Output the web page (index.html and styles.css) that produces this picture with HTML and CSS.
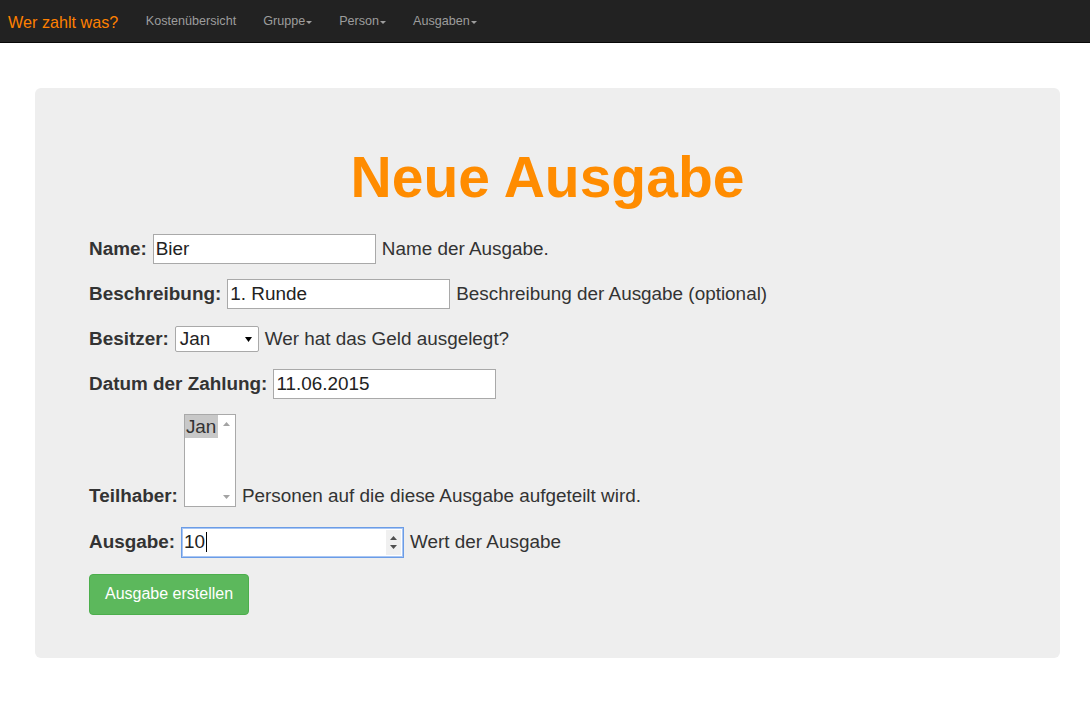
FILE: index.html
```html
<!DOCTYPE html>
<html lang="de">
<head>
<meta charset="utf-8">
<title>Neue Ausgabe</title>
<link rel="stylesheet" href="styles.css">
</head>
<body>
<nav class="navbar">
  <a class="brand" href="#">Wer zahlt was?</a>
  <ul class="nav">
    <li><a href="#">Kostenübersicht</a></li>
    <li><a href="#">Gruppe<span class="caret"></span></a></li>
    <li><a href="#">Person<span class="caret"></span></a></li>
    <li><a href="#">Ausgaben<span class="caret"></span></a></li>
  </ul>
</nav>
<main class="page">
  <section class="jumbotron">
    <h1 class="title">Neue Ausgabe</h1>
    <form class="form">
      <div class="row">
        <label class="lbl">Name:</label>
        <span class="input w-name">Bier</span>
        <span class="help">Name der Ausgabe.</span>
      </div>
      <div class="row">
        <label class="lbl">Beschreibung:</label>
        <span class="input">1. Runde</span>
        <span class="help">Beschreibung der Ausgabe (optional)</span>
      </div>
      <div class="row">
        <label class="lbl">Besitzer:</label>
        <span class="select">Jan
          <svg class="select-arrow" width="7" height="5" viewBox="0 0 7 5"><path d="M0 0H7L3.5 5Z" fill="#000"/></svg>
        </span>
        <span class="help">Wer hat das Geld ausgelegt?</span>
      </div>
      <div class="row">
        <label class="lbl">Datum der Zahlung:</label>
        <span class="input">11.06.2015</span>
      </div>
      <div class="row row-bottom">
        <label class="lbl">Teilhaber:</label>
        <span class="listbox">
          <span class="options"><span class="option sel">Jan</span></span>
          <span class="scrollbar">
            <svg width="7" height="4" viewBox="0 0 7 4"><path d="M0 4H7L3.5 0Z" fill="#a3a3a3"/></svg>
            <svg width="7" height="4" viewBox="0 0 7 4"><path d="M0 0H7L3.5 4Z" fill="#a3a3a3"/></svg>
          </span>
        </span>
        <span class="help">Personen auf die diese Ausgabe aufgeteilt wird.</span>
      </div>
      <div class="row row-num">
        <label class="lbl">Ausgabe:</label>
        <span class="input focus"><span class="val">10</span><span class="cursor"></span>
          <span class="spin">
            <svg width="7" height="4" viewBox="0 0 7 4"><path d="M0 4H7L3.5 0Z" fill="#505050"/></svg>
            <svg width="7" height="4" viewBox="0 0 7 4"><path d="M0 0H7L3.5 4Z" fill="#505050"/></svg>
          </span>
        </span>
        <span class="help">Wert der Ausgabe</span>
      </div>
      <div class="row-btn">
        <button type="button" class="btn">Ausgabe erstellen</button>
      </div>
    </form>
  </section>
</main>
</body>
</html>
```
FILE: styles.css
```css
* { box-sizing: border-box; }
html, body { margin: 0; padding: 0; background: #fff; }
body {
  font-family: "Liberation Sans", Arial, sans-serif;
  color: #333;
  font-size: 18.9px;
}
.navbar {
  height: 43px;
  background: #222;
  border-bottom: 1px solid #080808;
  display: flex;
  align-items: center;
}
.brand {
  color: #ff8000;
  text-decoration: none;
  font-size: 16.2px;
  margin-left: 8px;
  margin-top: 2px;
}
.nav {
  list-style: none;
  margin: 0 0 0 14px;
  padding: 0;
  display: flex;
}
.nav a {
  display: flex;
  align-items: center;
  color: #9d9d9d;
  text-decoration: none;
  font-size: 12.6px;
  padding: 0 13.5px;
}
.caret {
  display: inline-block;
  width: 0;
  height: 0;
  margin-left: 1px;
  margin-top: 2px;
  border-top: 3px solid #9d9d9d;
  border-left: 3px solid transparent;
  border-right: 3px solid transparent;
}
.page { padding: 45px 30px 0 35px; }
.jumbotron {
  background: #eee;
  border-radius: 6px;
  padding: 58px 54px 43px;
}
.title {
  margin: 0 0 25px;
  text-align: center;
  color: #ff8c00;
  font-size: 57px;
  line-height: 1.1;
  font-weight: bold;
}
.form { display: flex; flex-direction: column; gap: 15px; }
.row { display: flex; align-items: center; height: 30px; }
.lbl { font-weight: bold; margin-right: 6px; }
.help { margin-left: 6px; }
.input {
  display: inline-flex;
  align-items: center;
  width: 223px;
  height: 30px;
  padding: 0 2px;
  background: #fff;
  border: 1px solid #a9a9a9;
  color: #222;
}
.select {
  position: relative;
  display: inline-flex;
  align-items: center;
  width: 84px;
  height: 26px;
  padding: 0 4px;
  background: #fff;
  border: 1px solid #a9a9a9;
  border-radius: 2px;
  color: #222;
}
.select-arrow { position: absolute; right: 6px; top: 10px; }
.row-bottom { height: 93px; align-items: flex-end; }
.row-bottom .lbl, .row-bottom .help { margin-bottom: 0; }
.listbox {
  display: flex;
  width: 52px;
  height: 93px;
  background: #fff;
  border: 1px solid #a9a9a9;
}
.options { flex: 1; display: flex; flex-direction: column; }
.option { height: 23px; line-height: 23px; padding-left: 1px; color: #333; }
.option.sel { background: #c8c8c8; }
.scrollbar {
  width: 17px;
  display: flex;
  flex-direction: column;
  justify-content: space-between;
  align-items: center;
  padding: 7px 0 7px;
}
.row-num { height: 31px; margin-top: 5px; }
.input.focus {
  position: relative;
  height: 31px;
  border: 1px solid #6b9ce6;
  box-shadow: inset 0 0 0 1px #a8c6f4;
}
.cursor {
  display: inline-block;
  width: 1px;
  height: 20px;
  background: #000;
  margin-left: 1px;
}
.spin {
  position: absolute;
  right: 2px;
  top: 2px;
  bottom: 2px;
  width: 15px;
  background: #f0f0f0;
  display: flex;
  flex-direction: column;
  justify-content: center;
  align-items: center;
  gap: 5px;
}
.row-btn { display: flex; margin-top: 1px; }
.btn {
  font-family: "Liberation Sans", Arial, sans-serif;
  font-size: 16px;
  color: #fff;
  background: #5cb85c;
  border: 1px solid #4cae4c;
  border-radius: 4px;
  height: 41px;
  padding: 0 14px;
  width: 160px;
}
```
